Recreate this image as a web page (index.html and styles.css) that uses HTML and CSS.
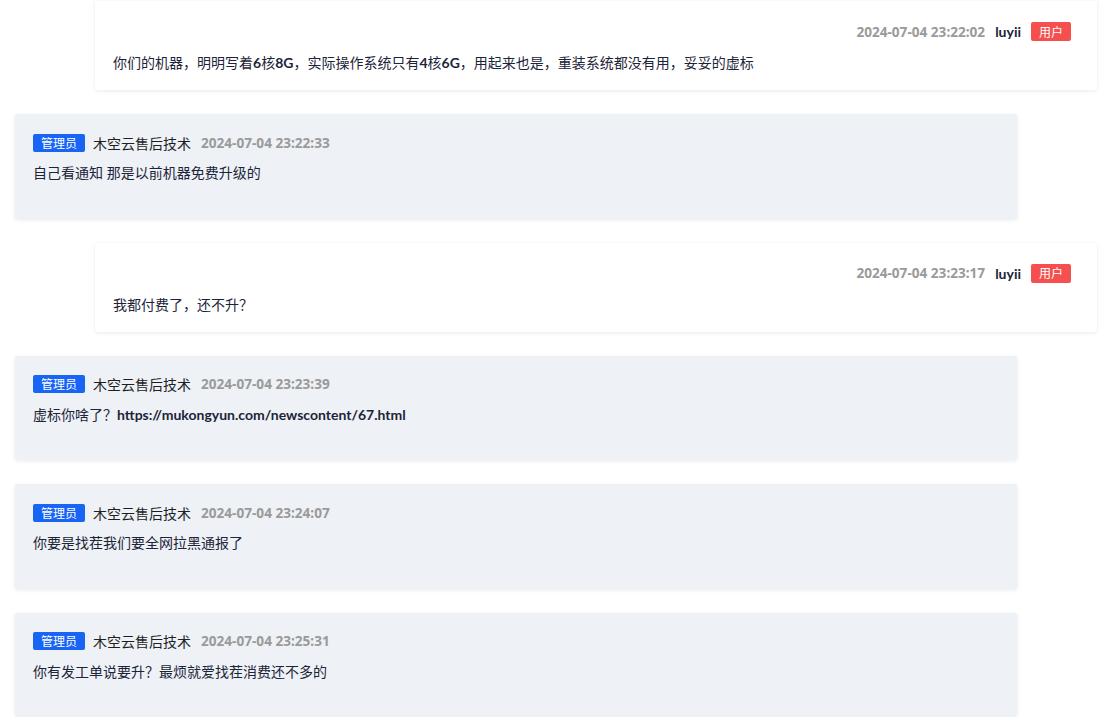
FILE: index.html
```html
<!DOCTYPE html>
<html lang="zh-CN">
<head>
    <meta charset="UTF-8">
    <meta name="viewport" content="width=device-width, initial-scale=1.0">
    <title>工单回复</title>
    <link rel="stylesheet" href="styles.css">
</head>
<body>
    <div class="reply-list">
        <div class="reply reply-user">
            <div class="reply-meta">
                <span class="reply-time">2024-07-04 23:22:02</span>
                <span class="reply-name">luyii</span>
                <span class="tag tag-user">用户</span>
            </div>
            <div class="reply-text">你们的机器，明明写着<span class="latin">6</span>核<span class="latin">8G</span>，实际操作系统只有<span class="latin">4</span>核<span class="latin">6G</span>，用起来也是，重装系统都没有用，妥妥的虚标</div>
        </div>

        <div class="reply reply-admin">
            <div class="reply-meta">
                <span class="tag tag-admin">管理员</span>
                <span class="reply-staff">木空云售后技术</span>
                <span class="reply-time">2024-07-04 23:22:33</span>
            </div>
            <div class="reply-text">自己看通知 那是以前机器免费升级的</div>
        </div>

        <div class="reply reply-user">
            <div class="reply-meta">
                <span class="reply-time">2024-07-04 23:23:17</span>
                <span class="reply-name">luyii</span>
                <span class="tag tag-user">用户</span>
            </div>
            <div class="reply-text">我都付费了，还不升？</div>
        </div>

        <div class="reply reply-admin">
            <div class="reply-meta">
                <span class="tag tag-admin">管理员</span>
                <span class="reply-staff">木空云售后技术</span>
                <span class="reply-time">2024-07-04 23:23:39</span>
            </div>
            <div class="reply-text">虚标你啥了？<span class="latin">https://mukongyun.com/newscontent/67.html</span></div>
        </div>

        <div class="reply reply-admin">
            <div class="reply-meta">
                <span class="tag tag-admin">管理员</span>
                <span class="reply-staff">木空云售后技术</span>
                <span class="reply-time">2024-07-04 23:24:07</span>
            </div>
            <div class="reply-text">你要是找茬我们要全网拉黑通报了</div>
        </div>

        <div class="reply reply-admin">
            <div class="reply-meta">
                <span class="tag tag-admin">管理员</span>
                <span class="reply-staff">木空云售后技术</span>
                <span class="reply-time">2024-07-04 23:25:31</span>
            </div>
            <div class="reply-text">你有发工单说要升？最烦就爱找茬消费还不多的</div>
        </div>
    </div>
</body>
</html>
```

FILE: styles.css
```css
body {
    margin: 0;
    background: #fff;
    font-family: "Noto Sans", "Noto Sans CJK SC", sans-serif;
    font-size: 14px;
    color: #1c2438;
}

.reply-list {
    display: flex;
    flex-direction: column;
    gap: 24px;
    width: 1002px;
    padding: 1px 0 0 15px;
}

.reply {
    width: 1002px;
    box-sizing: border-box;
    border-radius: 2px;
    box-shadow: 0 1px 4px rgba(0, 0, 0, 0.09);
}

.reply-user {
    margin-left: 80px;
    height: 89px;
    padding: 21px 26px 0 18px;
    background: #fff;
}

.reply-admin {
    height: 104.5px;
    padding: 19px 18px 0 18px;
    background: #eef1f6;
}

.reply-meta {
    display: flex;
    align-items: center;
    height: 19px;
    gap: 10px;
}

.reply-user .reply-meta {
    justify-content: flex-end;
}

.reply-admin .reply-meta {
    gap: 8px;
}

.reply-time {
    font-weight: 700;
    font-size: 13.6px;
    color: #9a9a9a;
    margin-top: -1px;
}

.reply-admin .reply-time {
    margin-left: 2px;
}

.reply-name {
    font-family: "Lato", "Noto Sans", sans-serif;
    font-weight: 700;
    font-size: 14px;
    color: #1c2438;
}

.reply-staff {
    color: #1f1f1f;
}

.tag {
    display: inline-flex;
    align-items: center;
    justify-content: center;
    height: 19px;
    border-radius: 2px;
    color: #fff;
    font-size: 12px;
}

.tag-user {
    width: 40px;
    background: #f5504f;
}

.tag-admin {
    width: 52px;
    height: 18px;
    background: #1764f5;
}

.reply-text {
    margin-top: 11px;
    line-height: 22px;
}

.reply-admin .reply-text {
    margin-top: 10px;
}

.latin {
    font-family: "Lato", "Noto Sans", sans-serif;
    font-weight: 700;
}
```
